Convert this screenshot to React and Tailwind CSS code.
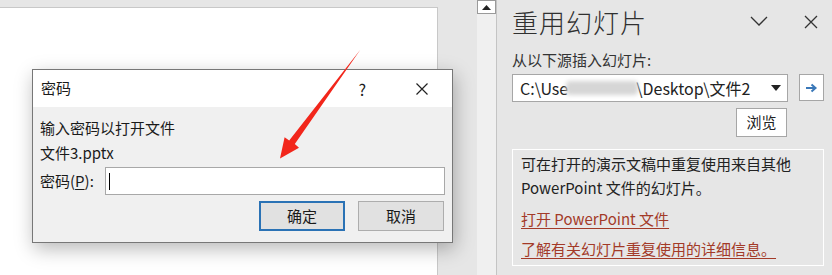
import React from 'react';

const font = "font-['Noto_Sans_CJK_SC',_'Noto_Sans',sans-serif]";

const Panel = () => (
    <div className="flex-1 pl-[15px] pr-[8px] text-[#262626]">
        {/* header */}
        <div className="h-[44px] flex items-center">
            <span className="text-[26px] leading-none font-light tracking-[1px] text-[#303030]">重用幻灯片</span>
            <div className="flex-1" />
            <svg width="18" height="10" viewBox="0 0 18 10" className="mr-[36px] mt-[-2px]">
                <path d="M1 1 L9 9 L17 1" fill="none" stroke="#333" strokeWidth="1.3" />
            </svg>
            <svg width="14" height="14" viewBox="0 0 14 14" className="mr-[6px]">
                <path d="M1 1 L13 13 M13 1 L1 13" fill="none" stroke="#333" strokeWidth="1.3" />
            </svg>
        </div>

        <div className="mt-[6px] text-[15px] leading-[20px] text-[#333]">从以下源插入幻灯片:</div>

        <div className="mt-[4px] flex items-start">
            <div className="w-[276px] h-[28px] bg-white border border-[#a6a6a6] flex items-center pl-[7px] pr-[6px] text-[16px] text-[#222]">
                <span>C:\Use</span>
                <span className="w-[72px] h-[14px] mx-[-2px] bg-[#d6d6d6] blur-[2px] rounded" />
                <span>\Desktop\文件2</span>
                <div className="flex-1" />
                <svg width="10" height="6" viewBox="0 0 10 6">
                    <path d="M0 0 L10 0 L5 6 Z" fill="#222" />
                </svg>
            </div>
            <div className="ml-[11px] w-[25px] h-[27px] bg-white border border-[#a6a6a6] flex items-center justify-center">
                <svg width="13" height="10" viewBox="0 0 13 10">
                    <path d="M1 5 H10 M6.5 1.5 L10.5 5 L6.5 8.5" fill="none" stroke="#3a78b8" strokeWidth="2" />
                </svg>
            </div>
        </div>

        <div className="mt-[6px] flex justify-end pr-[37px]">
            <div className="w-[51px] h-[29px] bg-white border border-[#a6a6a6] flex items-center justify-center text-[15px] text-[#222]">浏览</div>
        </div>

        <div className="mt-[12px] w-[312px] h-[117px] border border-white pl-[8px] pt-[2px] text-[15px] text-[#222]">
            <div className="leading-[24px]">可在打开的演示文稿中重复使用来自其他</div>
            <div className="leading-[24px]">PowerPoint 文件的幻灯片。</div>
            <div className="mt-[7px] leading-[24px] text-[#a33a28] underline underline-offset-[3px]">打开 PowerPoint 文件</div>
            <div className="mt-[6px] leading-[24px] text-[#a33a28] underline underline-offset-[3px]">了解有关幻灯片重复使用的详细信息。</div>
        </div>
    </div>
);

const PasswordDialog = () => (
    <div className="absolute left-[32px] top-[69px] w-[421px] h-[174px] border border-[#777] bg-[#f0f0f0] shadow-[2px_6px_18px_rgba(0,0,0,0.28)] text-[#1a1a1a]">
        <div className="h-[37px] bg-white flex items-center pl-[8px]">
            <span className="text-[15px]">密码</span>
            <div className="flex-1" />
            <span className="text-[16px] mr-[50px]">?</span>
            <svg width="12" height="12" viewBox="0 0 12 12" className="mr-[24px]">
                <path d="M0.5 0.5 L11.5 11.5 M11.5 0.5 L0.5 11.5" fill="none" stroke="#222" strokeWidth="1.2" />
            </svg>
        </div>
        <div className="px-[7px] pt-[9px] text-[15px]">
            <div className="leading-[24px]">输入密码以打开文件</div>
            <div className="leading-[25px]">文件3.pptx</div>
            <div className="mt-[2px] flex items-center">
                <span className="w-[65px]">密码(<span className="underline underline-offset-2">P</span>):</span>
                <div className="flex-1 h-[28px] bg-white border border-[#a8a8a8] flex items-center pl-[3px]">
                    <div className="w-px h-[17px] bg-black" />
                </div>
            </div>
            <div className="mt-[6px] flex justify-end gap-[13px] pr-[1px]">
                <div className="w-[86px] h-[30px] bg-[#e1e1e1] border-2 border-[#2a72b5] flex items-center justify-center">确定</div>
                <div className="w-[86px] h-[30px] bg-[#e1e1e1] border border-[#adadad] flex items-center justify-center">取消</div>
            </div>
        </div>
    </div>
);

const RedArrow = () => (
    <svg className="absolute left-0 top-0 pointer-events-none" width="832" height="275" viewBox="0 0 832 275">
        <path
            d="M360.5 49.5 L294.8 144 L299 147.8 L280 158.5 L284.6 137.2 L289.2 140.4 Z"
            fill="#f2261b"
        />
    </svg>
);

export default function App() {
    return (
        <div className={`relative w-[832px] h-[275px] overflow-hidden bg-[#e6e6e6] flex ${font}`}>
            {/* slide area */}
            <div className="w-[477px] shrink-0 pt-[7px]">
                <div className="w-[438px] h-full bg-white border-t border-r border-[#c8c8c8]" />
            </div>

            {/* scrollbar */}
            <div className="w-[20px] shrink-0 bg-[#f0f0f0] border-r border-[#c4c4c4]">
                <div className="h-[14px] bg-white border border-[#9a9a9a] flex items-center justify-center">
                    <svg width="9" height="5" viewBox="0 0 9 5">
                        <path d="M0 5 L4.5 0 L9 5 Z" fill="#222" />
                    </svg>
                </div>
            </div>

            <Panel />

            <PasswordDialog />
            <RedArrow />
        </div>
    );
}
